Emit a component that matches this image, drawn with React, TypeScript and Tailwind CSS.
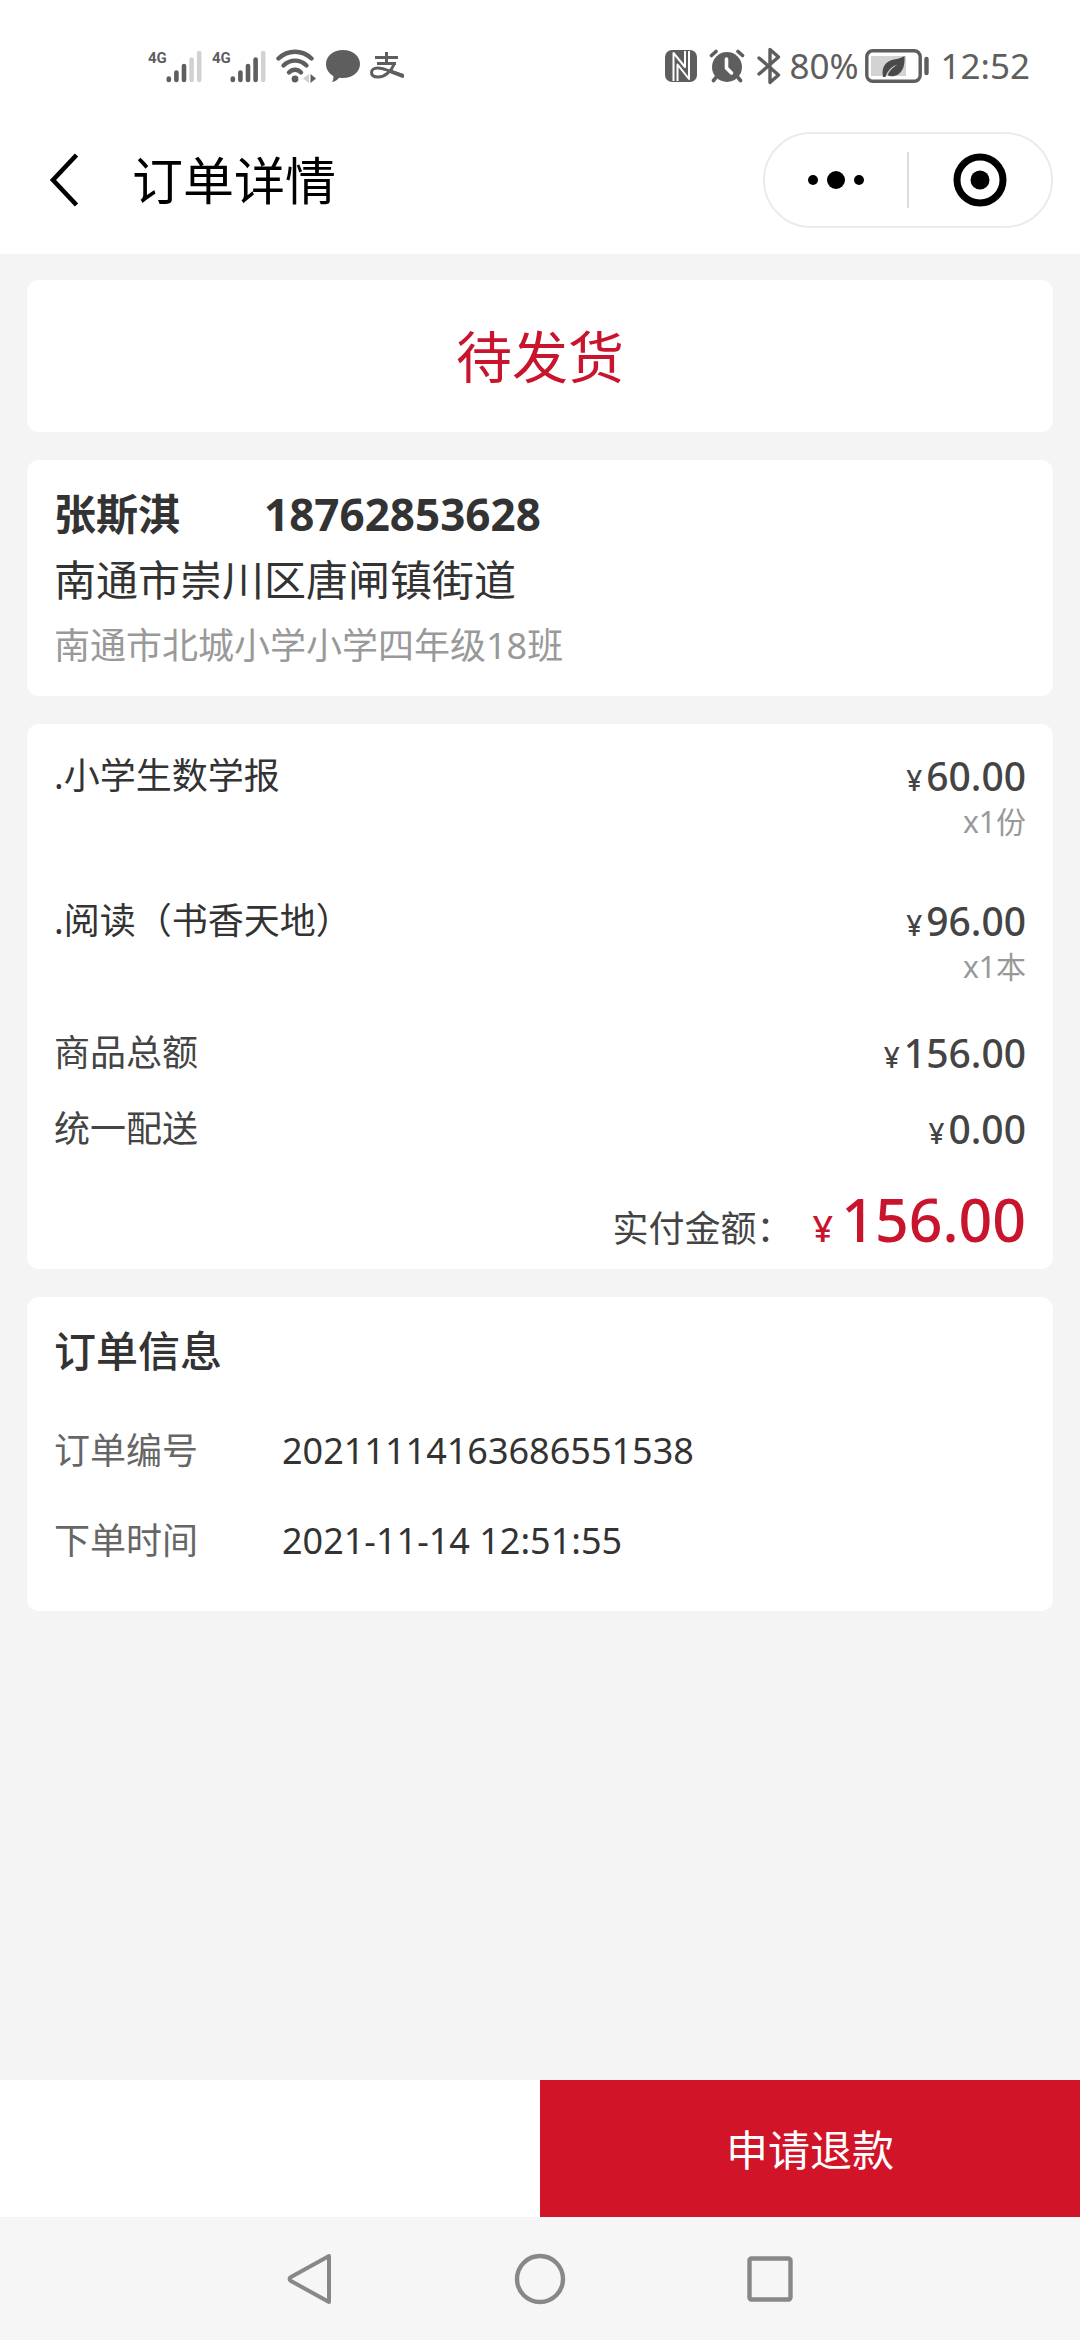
import React from 'react';

interface OrderItem {
  id: number;
  name: string;
  price: string;
  quantity: string;
}

const items: OrderItem[] = [
  { id: 1, name: '.小学生数学报', price: '60.00', quantity: 'x1份' },
  { id: 2, name: '.阅读（书香天地）', price: '96.00', quantity: 'x1本' },
];

const totals = [
  { label: '商品总额', value: '156.00' },
  { label: '统一配送', value: '0.00' },
];

const info = [
  { label: '订单编号', value: '20211114163686551538' },
  { label: '下单时间', value: '2021-11-14 12:51:55' },
];

const Signal: React.FC<{ level: number }> = ({ level }) => (
  <div className="flex h-9 items-start">
    <span className="w-[18px] font-['Roboto'] text-[15px] leading-5 font-bold">4G</span>
    <svg width="36" height="36" viewBox="0 0 36 36" strokeWidth="4.6" strokeLinecap="round">
      {[30.5, 24.5, 18, 11.5, 5].map((y, i) => (
        <path key={y} d={`M${2.8 + i * 7.6} 32V${y}`} stroke={i < level ? '#5e5e5e' : '#d2d2d2'} />
      ))}
    </svg>
  </div>
);

const WifiIcon = () => (
  <svg width="40" height="36" viewBox="0 0 40 36" fill="none" stroke="#5e5e5e" strokeWidth="4.4" strokeLinecap="round">
    <path d="M2.5 10.5C12 1.5 26 1.5 35.5 10.5" />
    <path d="M7.5 17.5C14 11 24 11 30.5 17.5" />
    <path d="M13 24.5C16.5 20.8 21.5 20.8 25 24.5" />
    <circle cx="19" cy="31" r="3.4" fill="#5e5e5e" stroke="none" />
    <path d="M33 26v9l-6-4.500z" fill="#cfcfcf" stroke="none" />
    <path d="M34.5 26v9l5.5-4.5z" fill="#5e5e5e" stroke="none" />
  </svg>
);

const BubbleIcon = () => (
  <svg width="34" height="34" viewBox="0 0 34 34" fill="#5e5e5e">
    <path d="M17 1C26.5 1 34 7 34 15s-7.500 14-17 14c-1.300 0-2.600-.1-3.800-.3-1.700 2.300-4.200 3.800-7.200 4.300 1.200-1.700 1.700-3.500 1.300-6C2.800 24.500 0 20.200 0 15 0 7 7.500 1 17 1z" />
  </svg>
);

const AlipayIcon = () => (
  <svg width="34" height="30" viewBox="0 0 34 30" fill="none" stroke="#5e5e5e" strokeWidth="3">
    <path d="M5 6.500h23M16.500 1v11M7 12.500h19" />
    <path d="M24.500 12.500C21.500 20 15 26 8 26c-4 0-6.500-1.800-6.500-4.500S4 17 7.500 17c7 0 13 4 25.500 7.500" />
    <path d="M21 20.500l13 5" strokeWidth="4" />
  </svg>
);

const NfcIcon = () => (
  <svg width="32" height="32" viewBox="0 0 32 32">
    <rect width="32" height="32" rx="7" fill="#5e5e5e" />
    <path d="M8.500 31V3L20 17V1M12.500 31V14.500L24 29V1" fill="none" stroke="#fff" strokeWidth="2" strokeLinejoin="round" />
  </svg>
);

const AlarmIcon = () => (
  <svg width="36" height="34" viewBox="0 0 36 34" fill="none" stroke="#5e5e5e" strokeWidth="3.6" strokeLinecap="round">
    <circle cx="18" cy="18" r="15" fill="#5e5e5e" stroke="none" />
    <path d="M2.500 6.500L7 2.500M33.500 6.500L29 2.500M7 28.500l-2.500 3M29 28.500l2.500 3" />
    <path d="M17.500 10v9l5 5" stroke="#fff" />
  </svg>
);

const BluetoothIcon = () => (
  <svg width="24" height="38" viewBox="0 0 24 38" fill="none" stroke="#5e5e5e" strokeWidth="3.4" strokeLinejoin="round" strokeLinecap="round">
    <path d="M2 11l19.500 17L13 35.500v-33L21.500 10 2 27" />
  </svg>
);

const BatteryIcon = () => (
  <svg width="66" height="34" viewBox="0 0 66 34">
    <rect x="1.8" y="1.8" width="53.4" height="30.4" rx="6" fill="none" stroke="#5e5e5e" strokeWidth="3.4" />
    <rect x="6" y="7" width="35" height="20" fill="#d3d3d3" />
    <path d="M18 28c-2-10 3-16 11-17.500 4-.8 7-1.500 10.500-3.500.5 8-1 15-6.500 18.500-4 2.500-8 2-10.500.5 2.500-5 6-8 10-10.500-5 1.500-9.500 5-12 12.500z" fill="#4a4a4a" />
    <path d="M61.500 10v14" stroke="#5e5e5e" strokeWidth="4.4" strokeLinecap="round" />
  </svg>
);

const StatusBar = () => (
  <div className="flex h-33 items-center justify-between pr-[50px] pl-[148px] text-[#5e5e5e]">
    <div className="flex items-center gap-2.5">
      <Signal level={3} />
      <Signal level={4} />
      <WifiIcon />
      <BubbleIcon />
      <AlipayIcon />
    </div>
    <div className="flex items-center text-[35px] leading-10">
      <div className="flex items-center gap-3 pr-2">
        <NfcIcon />
        <AlarmIcon />
        <BluetoothIcon />
      </div>
      <span className="pr-1.5">80%</span>
      <BatteryIcon />
      <span className="pl-2.5">12:52</span>
    </div>
  </div>
);

const TitleBar = () => (
  <div className="flex h-24 items-center pr-[27px] pl-12">
    <button type="button" aria-label="返回" className="cursor-pointer">
      <svg width="32" height="56" viewBox="0 0 32 56" fill="none" stroke="#000" strokeWidth="4.6">
        <path d="M28.500 3L5 28l23.500 25" />
      </svg>
    </button>
    <h1 className="pl-[52px] text-[51px] leading-16 text-black">订单详情</h1>
    <div className="ml-auto flex h-24 w-[290px] items-center rounded-full border-2 border-[#ebebeb]">
      <button type="button" aria-label="更多" className="flex flex-1 cursor-pointer justify-center">
        <svg width="56" height="18" viewBox="0 0 56 18">
          <circle cx="5" cy="9" r="5" />
          <circle cx="28" cy="9" r="9" />
          <circle cx="51" cy="9" r="5" />
        </svg>
      </button>
      <div className="h-14 w-0.5 bg-[#dcdcdc]" />
      <button type="button" aria-label="关闭" className="flex flex-1 cursor-pointer justify-center">
        <svg width="54" height="54" viewBox="0 0 54 54">
          <circle cx="27" cy="27" r="23" fill="none" stroke="#000" strokeWidth="7" />
          <circle cx="27" cy="27" r="9.5" />
        </svg>
      </button>
    </div>
  </div>
);

const Price: React.FC<{ value: string }> = ({ value }) => (
  <span className="flex items-baseline gap-1 text-[39px] leading-12 font-medium text-[#444]">
    <span className="text-[28px] leading-none">¥</span>
    {value}
  </span>
);

export default function App() {
  return (
    <div className="flex min-h-screen flex-col bg-[#f4f4f4] font-['Noto_Sans','Noto_Sans_CJK_SC',sans-serif] text-[36px] leading-12 text-[#333]">
      <header className="bg-white pb-[26px]">
        <StatusBar />
        <TitleBar />
      </header>

      <main className="flex flex-1 flex-col gap-7 px-[27px] pt-[26px]">
        <section className="rounded-xl bg-white py-9 text-center text-[56px] leading-20 text-[#c8152d]">
          待发货
        </section>

        <section className="flex flex-col gap-[18px] rounded-xl bg-white px-[27px] pt-[30px] pb-[26px]">
          <div className="flex gap-[84px] text-[42px] font-bold">
            <span>张斯淇</span>
            <span className="text-[44px]">18762853628</span>
          </div>
          <p className="text-[42px]">南通市崇川区唐闸镇街道</p>
          <p className="text-[#999]">南通市北城小学小学四年级18班</p>
        </section>

        <section className="rounded-xl bg-white px-[27px] pt-7 pb-3">
          <div className="flex flex-col gap-[53px]">
            {items.map(item => (
              <div key={item.id} className="flex items-start justify-between">
                <span>{item.name}</span>
                <div className="flex flex-col items-end">
                  <Price value={item.price} />
                  <span className="text-[30px] leading-11 text-[#999]">{item.quantity}</span>
                </div>
              </div>
            ))}
          </div>
          <div className="flex flex-col gap-7 pt-10">
            {totals.map(row => (
              <div key={row.label} className="flex justify-between text-[#444]">
                <span>{row.label}</span>
                <Price value={row.value} />
              </div>
            ))}
          </div>
          <div className="flex items-baseline justify-end pt-7 text-[#444]">
            <span>实付金额：</span>
            <span className="flex items-baseline gap-2 pl-5 text-[59px] leading-19 font-medium text-[#c8152d]">
              <span className="text-[36px] leading-none">¥</span>
              156.00
            </span>
          </div>
        </section>

        <section className="rounded-xl bg-white px-[27px] pt-[30px] pb-[46px]">
          <h2 className="text-[42px] font-medium">订单信息</h2>
          <dl className="flex flex-col gap-[42px] pt-[52px]">
            {info.map(row => (
              <div key={row.label} className="flex">
                <dt className="w-57 text-[#666]">{row.label}</dt>
                <dd>{row.value}</dd>
              </div>
            ))}
          </dl>
        </section>
      </main>

      <footer>
        <div className="flex bg-white">
          <button type="button" className="ml-auto w-1/2 cursor-pointer bg-[#d11427] pt-[46px] pb-[43px] text-[42px] text-white">
            申请退款
          </button>
        </div>
        <nav className="flex h-[123px] items-center justify-center gap-[178px] bg-[#f6f6f6]">
          <button type="button" aria-label="后退" className="cursor-pointer">
            <svg width="52" height="52" viewBox="0 0 52 52" fill="none" stroke="#888" strokeWidth="4" strokeLinejoin="round">
              <path d="M45 3v46L7 28q-3-2 0-4z" />
            </svg>
          </button>
          <button type="button" aria-label="主屏幕" className="cursor-pointer">
            <svg width="52" height="52" viewBox="0 0 52 52" fill="none" stroke="#888" strokeWidth="4.4">
              <circle cx="26" cy="26" r="23" />
            </svg>
          </button>
          <button type="button" aria-label="最近任务" className="cursor-pointer">
            <svg width="52" height="52" viewBox="0 0 52 52" fill="none" stroke="#888" strokeWidth="4.4">
              <rect x="5.500" y="5.500" width="41" height="41" rx="2" />
            </svg>
          </button>
        </nav>
      </footer>
    </div>
  );
}
